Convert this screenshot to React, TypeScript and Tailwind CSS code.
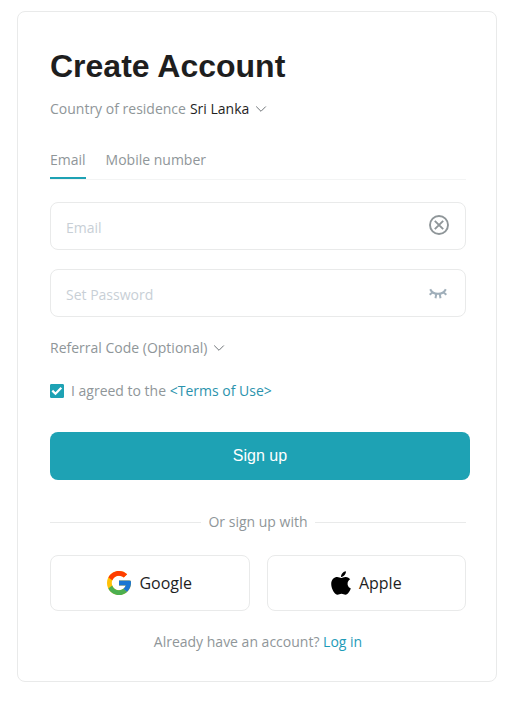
import React, { useState } from "react";

interface SocialButtonProps {
  label: string;
  icon: React.ReactNode;
}

const ChevronIcon: React.FC<{ className?: string }> = ({ className }) => (
  <svg viewBox="0 0 12 8" className={`h-2 w-3 ${className ?? ""}`} fill="none" stroke="#6f7478" aria-hidden="true">
    <path d="M1.2 1.5 6 6.3l4.8-4.8" />
  </svg>
);

const ClearIcon = () => (
  <svg viewBox="0 0 20 20" className="size-5" fill="none" stroke="#8f9699" strokeWidth="1.9" aria-hidden="true">
    <circle cx="10" cy="10" r="9" />
    <path d="m5.8 5.8 8.4 8.4M14.2 5.8l-8.4 8.4" />
  </svg>
);

const ClosedEyeIcon = () => (
  <svg viewBox="0 0 18 12" className="h-3 w-[18px]" fill="none" stroke="#a0afba" strokeWidth="2" aria-hidden="true">
    <path d="M1.200 1.200c3 6.200 12.600 6.200 15.600 0" />
    <path d="M3.400 4.400.6 6.800M7.300 5.800l-.8 4.400M10.700 5.800l.8 4.400M14.600 4.400l2.800 2.400" />
  </svg>
);

const GoogleIcon = () => (
  <svg viewBox="4 4 40 40" className="size-6" aria-hidden="true">
    <path
      fill="#FFC107"
      d="M43.611 20.083H42V20H24v8h11.303c-1.649 4.657-6.080 8-11.303 8-6.627 0-12-5.373-12-12s5.373-12 12-12c3.059 0 5.842 1.154 7.961 3.039l5.657-5.657C34.046 6.053 29.268 4 24 4 12.955 4 4 12.955 4 24s8.955 20 20 20 20-8.955 20-20c0-1.341-.138-2.650-.389-3.917z"
    />
    <path
      fill="#FF3D00"
      d="m6.306 14.691 6.571 4.819C14.655 15.108 18.961 12 24 12c3.059 0 5.842 1.154 7.961 3.039l5.657-5.657C34.046 6.053 29.268 4 24 4 16.318 4 9.656 8.337 6.306 14.691z"
    />
    <path
      fill="#4CAF50"
      d="M24 44c5.166 0 9.860-1.977 13.409-5.192l-6.190-5.238A11.910 11.910 0 0 1 24 36c-5.202 0-9.619-3.317-11.283-7.946l-6.522 5.025C9.505 39.556 16.227 44 24 44z"
    />
    <path
      fill="#1976D2"
      d="M43.611 20.083H42V20H24v8h11.303a12.040 12.040 0 0 1-4.087 5.571l.003-.002 6.190 5.238C36.971 39.205 44 34 44 24c0-1.341-.138-2.650-.389-3.917z"
    />
  </svg>
);

const AppleIcon = () => (
  <svg viewBox="0 32 384 448" className="h-6 w-5" aria-hidden="true">
    <path d="M318.7 268.7c-.2-36.7 16.4-64.4 50-84.8-18.8-26.9-47.2-41.7-84.7-44.6-35.5-2.8-74.3 20.7-88.5 20.7-15 0-49.4-19.7-76.4-19.7C63.3 141.2 4 184.8 4 273.5q0 39.3 14.4 81.2c12.8 36.7 59 126.7 107.200 125.200 25.200-.6 43-17.900 75.800-17.900 31.800 0 48.300 17.900 76.400 17.900 48.600-.7 90.400-82.500 102.600-119.300-65.200-30.700-61.700-90-61.700-91.900zm-56.600-164.200c27.300-32.400 24.800-61.900 24-72.500-24.100 1.400-52 16.400-67.900 34.900-17.500 19.800-27.800 44.300-25.600 71.900 26.100 2 49.900-11.400 69.500-34.300z" />
  </svg>
);

const SocialButton: React.FC<SocialButtonProps> = ({ label, icon }) => (
  <button
    type="button"
    className="flex h-14 flex-1 cursor-pointer items-center justify-center gap-2 rounded-lg border border-[#e9eaea] text-base text-[#1e1e1e] hover:bg-gray-50"
  >
    {icon}
    {label}
  </button>
);

export default function App() {
  const [tab, setTab] = useState("email");
  const [account, setAccount] = useState("");
  const [password, setPassword] = useState("");
  const [showPassword, setShowPassword] = useState(false);
  const [agreed, setAgreed] = useState(true);

  return (
    <main className="bg-white pt-[11px] pr-5 pb-6 pl-[17px] font-['Open_Sans','Liberation_Sans',sans-serif] text-sm leading-5 text-[#8f9699]">
      <form
        className="rounded-lg border border-[#e9eaea] pt-[34px] pr-[30px] pb-[29px] pl-8"
        onSubmit={(e) => e.preventDefault()}
      >
        <h1 className="font-['Liberation_Sans',Arial,sans-serif] text-[32px] leading-10 font-bold text-[#1e1e1e]">
          Create Account
        </h1>

        <div className="mt-[13px] flex items-center gap-1">
          <label htmlFor="country">Country of residence</label>
          <div className="relative flex items-center">
            <select
              id="country"
              className="field-sizing-content h-5 cursor-pointer appearance-none bg-transparent pr-[18px] text-[#1e1e1e] outline-none"
            >
              <option>Sri Lanka</option>
              <option>India</option>
              <option>Singapore</option>
            </select>
            <ChevronIcon className="pointer-events-none absolute right-0" />
          </div>
        </div>

        <div role="tablist" className="mt-[31px] flex gap-5 border-b border-[#f3f4f4]">
          <button
            type="button"
            role="tab"
            aria-selected={tab === "email"}
            onClick={() => setTab("email")}
            className={`cursor-pointer border-b-2 pb-[7px] ${tab === "email" ? "border-[#1ea2b4]" : "border-transparent"}`}
          >
            Email
          </button>
          <button
            type="button"
            role="tab"
            aria-selected={tab === "mobile"}
            onClick={() => setTab("mobile")}
            className={`cursor-pointer border-b-2 pb-[7px] ${tab === "mobile" ? "border-[#1ea2b4]" : "border-transparent"}`}
          >
            Mobile number
          </button>
        </div>

        <div className="mt-[22px] flex h-12 items-center rounded-lg border border-[#e9eaea] pr-4 pl-[15px]">
          <input
            type="text"
            aria-label="Email"
            placeholder="Email"
            value={account}
            onChange={(e) => setAccount(e.target.value)}
            className="min-w-0 flex-1 pt-1 text-[#1e1e1e] outline-none placeholder:text-[#c8cfd6]"
          />
          <button type="button" aria-label="Clear email" onClick={() => setAccount("")} className="cursor-pointer pb-0.5">
            <ClearIcon />
          </button>
        </div>

        <div className="mt-[19px] flex h-12 items-center rounded-lg border border-[#e9eaea] pr-[18px] pl-[15px]">
          <input
            type={showPassword ? "text" : "password"}
            aria-label="Set Password"
            placeholder="Set Password"
            value={password}
            onChange={(e) => setPassword(e.target.value)}
            className="min-w-0 flex-1 pt-1 text-[#1e1e1e] outline-none placeholder:text-[#c8cfd6]"
          />
          <button
            type="button"
            aria-label="Show password"
            onClick={() => setShowPassword(!showPassword)}
            className="cursor-pointer pt-0.5"
          >
            <ClosedEyeIcon />
          </button>
        </div>

        <button type="button" className="mt-[21px] flex cursor-pointer items-center gap-1.5">
          Referral Code (Optional)
          <ChevronIcon />
        </button>

        <div className="mt-[23px] flex items-center gap-[7px]">
          <span className="grid size-3.5 place-items-center">
            <input
              id="terms"
              type="checkbox"
              checked={agreed}
              onChange={(e) => setAgreed(e.target.checked)}
              className="col-start-1 row-start-1 size-3.5 cursor-pointer appearance-none rounded-[1px] border border-[#1ea2b4] checked:bg-[#1ea2b4]"
            />
            {agreed && (
              <svg
                viewBox="0 0 14 14"
                className="pointer-events-none col-start-1 row-start-1 size-3.5"
                fill="none"
                stroke="white"
                strokeWidth="2.2"
                aria-hidden="true"
              >
                <path d="m2.300 6.600 3.200 3.200 5.800-6" />
              </svg>
            )}
          </span>
          <p>
            <label htmlFor="terms">I agreed to the</label>{" "}
            <a href="#terms-of-use" className="text-[#2b93ad]">
              &lt;Terms of Use&gt;
            </a>
          </p>
        </div>

        {/* the button runs a little past the fields on the right */}
        <div className="mt-[31px] -mr-1">
          <button
            type="submit"
            className="h-12 w-full cursor-pointer rounded-lg bg-[#1ea2b4] font-['Liberation_Sans',Arial,sans-serif] text-base text-white hover:bg-[#1b93a3]"
          >
            Sign up
          </button>
        </div>

        <div className="mt-8 flex items-center gap-[7px]">
          <span className="h-px flex-1 bg-[#e9eaea]" />
          <span>Or sign up with</span>
          <span className="h-px flex-1 bg-[#e9eaea]" />
        </div>

        <div className="mt-[23px] flex gap-[17px]">
          <SocialButton label="Google" icon={<GoogleIcon />} />
          <SocialButton label="Apple" icon={<AppleIcon />} />
        </div>

        <p className="mt-[21px] text-center">
          Already have an account?{" "}
          <a href="#login" className="text-[#1e9bb8]">
            Log in
          </a>
        </p>
      </form>
    </main>
  );
}
